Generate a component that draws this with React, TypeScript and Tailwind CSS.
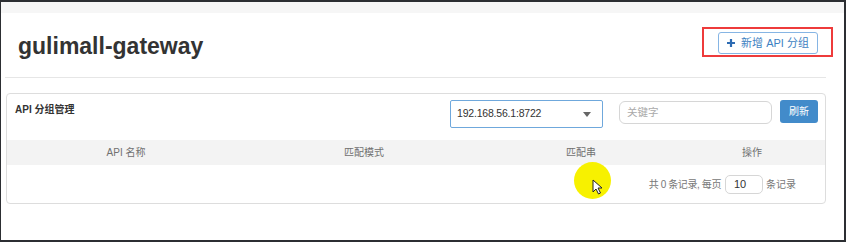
import React from "react";

const FONT = { fontFamily: '"Liberation Sans", Arial, "Noto Sans CJK SC", sans-serif' };

const COLS = [
  { label: "API 名称", w: "w-[238px]" },
  { label: "匹配模式", w: "w-[238px]" },
  { label: "匹配串", w: "w-[196px]" },
  { label: "操作", w: "flex-1" },
];

function Cursor() {
  return (
    <div className="absolute left-[573px] top-[160px] w-[37px] h-[37px] rounded-full bg-[#f7f100]">
      <svg width="12" height="16" viewBox="0 0 12 16" className="absolute left-[18px] top-[17px]">
        <path d="M1 1 L1 13 L4 10 L6.5 15 L8.5 14 L6 9 L10 9 Z" fill="#fff" stroke="#222" strokeWidth="1" strokeLinejoin="round"/>
      </svg>
    </div>
  );
}

export default function App() {
  return (
    <div style={FONT} className="w-[846px] h-[242px] bg-[#2c2e32] pt-[2px] pb-[2px] pl-[1px] pr-[2px]">
      <div className="relative h-full bg-white overflow-hidden">
        <div className="h-[11px] bg-[#f6f6f6]" />

        {/* header */}
        <div className="h-[64px] flex items-start justify-between">
          <h1 className="ml-[17px] mt-[22px] text-[23px] leading-[23px] font-bold text-[#333]">gulimall-gateway</h1>
          <div className="mt-[14px] mr-[11px] w-[131px] h-[30px] border-2 border-[#ee3b3b] flex items-start pl-[14px] pt-[3px]">
            <button className="w-[100px] h-[22px] border border-[#86b5e4] rounded-[3px] bg-white flex items-center justify-center gap-[6px] text-[11px] text-[#3d7fc2]">
              <svg width="8" height="8" viewBox="0 0 8 8">
                <path d="M4 0 V8 M0 4 H8" stroke="#2d6bb3" strokeWidth="2.2" />
              </svg>
              <span>新增 API 分组</span>
            </button>
          </div>
        </div>
        <div className="ml-[4px] mr-[18px] border-t border-[#e6e6e6]" />

        {/* panel */}
        <div className="ml-[5px] mt-[15px] w-[820px] h-[111px] border border-[#dddddd] rounded-[4px]">
          <div className="h-[46px] flex items-start pl-[8px] pr-[7px]">
            <div className="mt-[9px] text-[10px] leading-[13px] font-bold text-[#333]">API 分组管理</div>
            <div className="ml-auto mt-[6px] w-[153px] h-[28px] border border-[#6fa8dc] rounded-[2px] flex items-center pl-[6px] pr-[11px] text-[10.5px] tracking-[-0.2px] text-[#333]">
              <span>192.168.56.1:8722</span>
              <svg width="8" height="5" viewBox="0 0 8 5" className="ml-auto">
                <path d="M0 0 L8 0 L4 5 Z" fill="#666" />
              </svg>
            </div>
            <div className="ml-[16px] mt-[7px] w-[153px] h-[23px] border border-[#d6d6d6] rounded-[6px] flex items-center pl-[7px] text-[10.5px] text-[#aaa]">
              关键字
            </div>
            <button className="ml-[8px] mt-[6px] w-[38px] h-[23px] rounded-[3px] bg-[#428bca] text-white text-[10px] flex items-center justify-center">
              刷新
            </button>
          </div>

          <div className="h-[25px] bg-[#f3f3f3] flex items-center text-[10px] text-[#707070]">
            {COLS.map(c => (
              <div key={c.label} className={`${c.w} text-center`}>{c.label}</div>
            ))}
          </div>

          <div className="h-[38px] flex items-center justify-end pr-[29px] text-[10px] text-[#777]">
            <span className="tracking-[-0.4px]">共 0 条记录, 每页</span>
            <div className="ml-[4px] w-[38px] h-[19px] border border-[#d6d6d6] rounded-[5px] flex items-center pl-[8px] text-[11px] text-[#333]">10</div>
            <span className="ml-[3px]">条记录</span>
          </div>
        </div>

        <Cursor />
      </div>
    </div>
  );
}
